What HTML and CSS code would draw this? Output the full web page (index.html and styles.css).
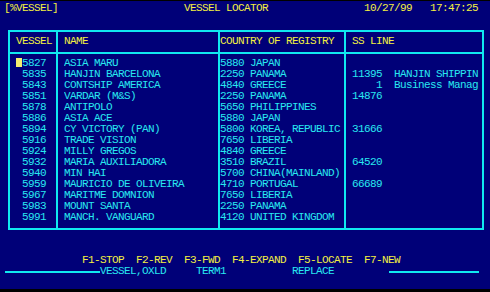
FILE: index.html
```html
<!DOCTYPE html>
<html lang="en">
  <head>
    <meta charset="UTF-8" />
    <title>Vessel Locator</title>
    <link rel="stylesheet" href="styles.css">
  </head>
  <body>
    <div class="screen">
      <div class="title yellow">[%VESSEL]                     VESSEL LOCATOR                10/27/99   17:47:25</div>

      <div class="grid">
        <div class="col col-vessel">
          <div class="head">VESSEL</div>
          <div class="body"><div class="line"><span class="cursor"></span>5827</div><div class="line"> 5835</div><div class="line"> 5843</div><div class="line"> 5851</div><div class="line"> 5878</div><div class="line"> 5886</div><div class="line"> 5894</div><div class="line"> 5916</div><div class="line"> 5924</div><div class="line"> 5932</div><div class="line"> 5940</div><div class="line"> 5959</div><div class="line"> 5967</div><div class="line"> 5983</div><div class="line"> 5991</div></div>
        </div>
        <div class="col col-name">
          <div class="head">NAME</div>
          <div class="body"><div class="line">ASIA MARU</div><div class="line">HANJIN BARCELONA</div><div class="line">CONTSHIP AMERICA</div><div class="line">VARDAR (M&amp;S)</div><div class="line">ANTIPOLO</div><div class="line">ASIA ACE</div><div class="line">CY VICTORY (PAN)</div><div class="line">TRADE VISION</div><div class="line">MILLY GREGOS</div><div class="line">MARIA AUXILIADORA</div><div class="line">MIN HAI</div><div class="line">MAURICIO DE OLIVEIRA</div><div class="line">MARITME DOMNION</div><div class="line">MOUNT SANTA</div><div class="line">MANCH. VANGUARD</div></div>
        </div>
        <div class="col col-country">
          <div class="head">COUNTRY OF REGISTRY</div>
          <div class="body"><div class="line">5880 JAPAN</div><div class="line">2250 PANAMA</div><div class="line">4840 GREECE</div><div class="line">2250 PANAMA</div><div class="line">5650 PHILIPPINES</div><div class="line">5880 JAPAN</div><div class="line">5800 KOREA, REPUBLIC</div><div class="line">7650 LIBERIA</div><div class="line">4840 GREECE</div><div class="line">3510 BRAZIL</div><div class="line">5700 CHINA(MAINLAND)</div><div class="line">4710 PORTUGAL</div><div class="line">7650 LIBERIA</div><div class="line">2250 PANAMA</div><div class="line">4120 UNITED KINGDOM</div></div>
        </div>
        <div class="col col-line">
          <div class="head">SS LINE</div>
          <div class="body"><div class="line"></div><div class="line">11395  HANJIN SHIPPIN</div><div class="line">    1  Business Manag</div><div class="line">14876</div><div class="line"></div><div class="line"></div><div class="line">31666</div><div class="line"></div><div class="line"></div><div class="line">64520</div><div class="line"></div><div class="line">66689</div><div class="line"></div><div class="line"></div><div class="line"></div></div>
        </div>
      </div>

      <div class="keys yellow">F1-STOP  F2-REV  F3-FWD  F4-EXPAND  F5-LOCATE  F7-NEW</div>
      <div class="status">
        <span class="rule rule-left"></span>
        <span class="status-text">VESSEL,OXLD     TERM1           REPLACE</span>
        <span class="rule rule-right"></span>
      </div>
    </div>
  </body>
</html>
```

FILE: styles.css
```css
body {
  margin: 0;
  background: #000;
  font-family: "Liberation Mono", monospace;
  font-size: 11px;
  line-height: 11px;
  letter-spacing: -0.6px;
  color: #28e8f0;
}

.screen {
  margin-top: 1px;
  width: 490px;
  height: 288px;
  background: #000078;
  overflow: hidden;
}

.yellow {
  color: #f4f040;
}

.title {
  white-space: pre;
  padding: 2px 0 0 4px;
  height: 11px;
}

.grid {
  display: flex;
  margin: 16px 0 0 8px;
  width: 472px;
  border: 2px solid #10e8f0;
}

.col {
  border-left: 2px solid #10e8f0;
}

.col:first-child {
  border-left: none;
}

.col-vessel { width: 46px; }
.col-name { width: 160px; }
.col-country { width: 124px; }
.col-line { width: 136px; }

.head {
  color: #f4f040;
  height: 11px;
  padding: 4px 0 5px 6px;
  border-bottom: 2px solid #10e8f0;
  white-space: pre;
}

.body {
  padding: 4px 0 5px 6px;
}

.col-country .head,
.col-country .body {
  padding-left: 0;
}

.line {
  height: 11px;
  white-space: pre;
  overflow: hidden;
}

.cursor {
  display: inline-block;
  width: 6px;
  height: 9px;
  vertical-align: -1px;
  background: #f4ec70;
}

.keys {
  white-space: pre;
  margin-top: 25px;
  padding-left: 82px;
  height: 11px;
}

.status {
  display: flex;
  align-items: center;
  height: 11px;
  padding-left: 5px;
}

.status-text {
  white-space: pre;
}

.rule {
  height: 2px;
  background: #10e8f0;
}

.rule-left {
  width: 95px;
}

.rule-right {
  width: 90px;
  margin-left: 55px;
}
```
